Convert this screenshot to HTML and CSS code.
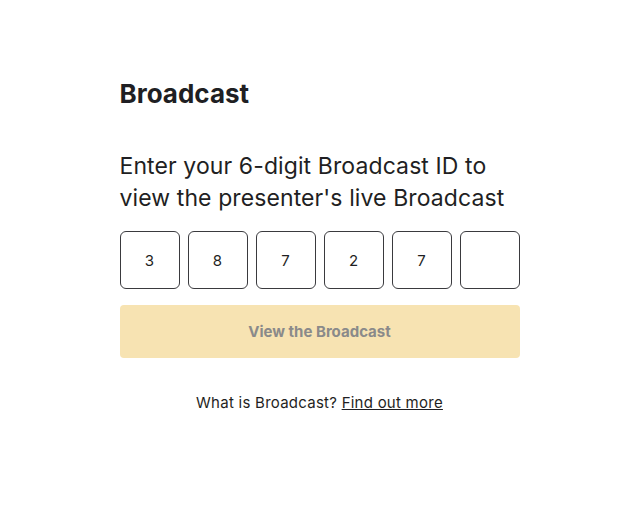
FILE: index.html
```html
<!DOCTYPE html>
<html lang="en">
<head>
<meta charset="utf-8">
<title>Broadcast</title>
<link rel="stylesheet" href="styles.css">
</head>
<body>
<main class="page">
  <h1 class="title">Broadcast</h1>
  <p class="lead">Enter your 6-digit Broadcast ID to view the presenter's live Broadcast</p>
  <div class="code">
    <input class="digit" type="text" maxlength="1" value="3">
    <input class="digit" type="text" maxlength="1" value="8">
    <input class="digit" type="text" maxlength="1" value="7">
    <input class="digit" type="text" maxlength="1" value="2">
    <input class="digit" type="text" maxlength="1" value="7">
    <input class="digit" type="text" maxlength="1" value="">
  </div>
  <button class="submit" type="button" disabled>View the Broadcast</button>
  <p class="help">What is Broadcast? <a class="link" href="#">Find out more</a></p>
</main>
</body>
</html>
```
FILE: styles.css
```css
html, body {
  margin: 0;
  padding: 0;
  background: #ffffff;
}
body {
  font-family: "Inter", "Noto Sans", sans-serif;
  color: #1f1f23;
}
.page {
  width: 400px;
  margin: 0 auto;
  padding-top: 78px;
  padding-left: 1px;
}
.title {
  margin: 0;
  font-size: 26px;
  font-weight: 700;
  line-height: 32px;
}
.lead {
  margin: 40px 0 0;
  font-size: 23px;
  line-height: 32px;
  font-weight: 400;
  letter-spacing: 0.1px;
}
.code {
  display: flex;
  gap: 8px;
  margin-top: 17px;
}
.digit {
  box-sizing: border-box;
  width: 60px;
  height: 58px;
  border: 1px solid #3a3a3e;
  border-radius: 6px;
  text-align: center;
  font-family: inherit;
  font-size: 15px;
  color: #1f1f23;
  background: #fff;
  padding: 0;
}
.submit {
  display: block;
  width: 400px;
  height: 53px;
  margin-top: 16px;
  border: none;
  border-radius: 4px;
  background: #f7e3b2;
  color: #8a8a8a;
  font-family: inherit;
  font-size: 15px;
  font-weight: 700;
}
.help {
  margin: 35px 0 0;
  text-align: center;
  font-size: 15px;
  line-height: 20px;
  letter-spacing: 0.25px;
}
.link {
  color: #1f1f23;
  text-decoration: underline;
}
```
